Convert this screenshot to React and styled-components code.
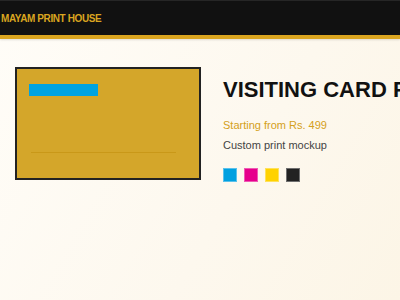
import React from 'react';
import styled, { createGlobalStyle } from 'styled-components';

const GlobalStyle = createGlobalStyle`
  html, body {
    margin: 0;
    padding: 0;
    height: 100%;
    overflow: hidden;
  }
  body {
    font-family: "Liberation Sans", Arial, sans-serif;
    background: linear-gradient(120deg, #fffdf8 0%, #fdf8ee 60%, #fcf5e6 100%);
  }
`;

const Header = styled.header`
  height: 39px;
  background: #111;
  border-top: 1px solid #262626;
  border-bottom: 4px solid #daa520;
  box-shadow: 0 1px 2px rgba(0, 0, 0, 0.12);
  display: flex;
  align-items: center;
  padding-left: 1px;
  box-sizing: border-box;
`;

const Brand = styled.div`
  color: #daa520;
  font-weight: bold;
  font-size: 10px;
  letter-spacing: -0.4px;
`;

const Main = styled.main`
  display: flex;
  align-items: flex-start;
  gap: 22px;
  padding: 28px 15px;
`;

const Card = styled.div`
  flex: 0 0 auto;
  width: 186px;
  height: 113px;
  box-sizing: border-box;
  background: #d4a62a;
  border: 2px solid #222;
  padding: 15px 14px 0 12px;
  display: flex;
  flex-direction: column;
`;

const NameBar = styled.div`
  width: 69px;
  height: 12px;
  background: #00a3e0;
`;

const Rule = styled.div`
  margin: 56px 9px 0 2px;
  height: 1px;
  background: #c99818;
`;

const Info = styled.div`
  display: flex;
  flex-direction: column;
  white-space: nowrap;
  padding-top: 8px;
`;

const Title = styled.h1`
  margin: 0;
  font-size: 22px;
  line-height: 29px;
  font-weight: bold;
  color: #111;
`;

const Price = styled.div`
  margin-top: 14px;
  font-size: 11px;
  line-height: 14px;
  color: #d4a020;
`;

const Note = styled.div`
  margin-top: 6px;
  font-size: 11px;
  line-height: 14px;
  color: #444;
`;

const Swatches = styled.div`
  display: flex;
  gap: 7px;
  margin-top: 16px;
`;

const Swatch = styled.span`
  width: 14px;
  height: 14px;
  box-sizing: border-box;
  background: ${(p) => p.color};
  border: 1px solid rgba(255, 255, 255, 0.35);
`;

const inks = ['#00a0e0', '#e6008c', '#ffd200', '#222'];

const App = () => (
  <>
    <GlobalStyle />
    <Header>
      <Brand>MAYAM PRINT HOUSE</Brand>
    </Header>
    <Main>
      <Card>
        <NameBar />
        <Rule />
      </Card>
      <Info>
        <Title>VISITING CARD PRINTING</Title>
        <Price>Starting from Rs. 499</Price>
        <Note>Custom print mockup</Note>
        <Swatches>
          {inks.map((c) => (
            <Swatch key={c} color={c} />
          ))}
        </Swatches>
      </Info>
    </Main>
  </>
);

export default App;
